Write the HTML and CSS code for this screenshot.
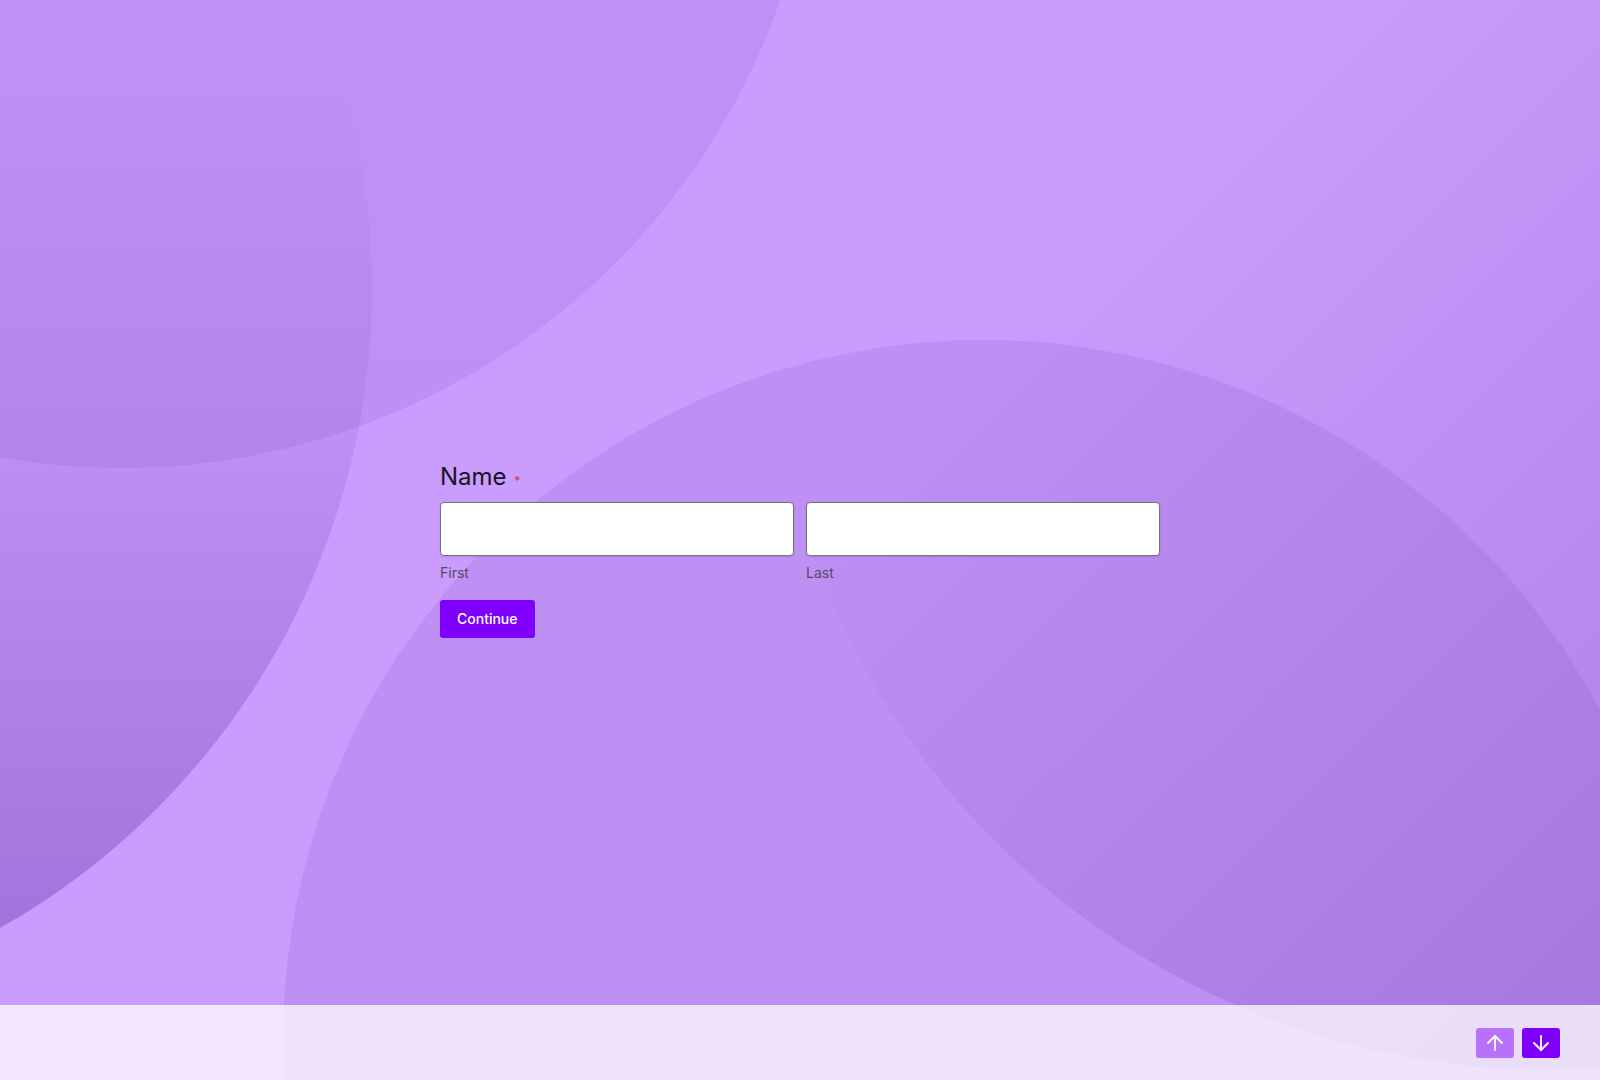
FILE: index.html
```html
<!DOCTYPE html>
<html lang="en">
<head>
<meta charset="utf-8">
<title>Name</title>
<link rel="stylesheet" href="styles.css">
</head>
<body>
  <div class="backdrop" aria-hidden="true">
    <div class="blob blob-1"></div>
    <div class="blob blob-2"></div>
    <div class="blob blob-3"></div>
    <div class="blob blob-4"></div>
  </div>

  <main class="stage">
    <form class="question">
      <h1 class="q-title">Name <span class="req">*</span></h1>
      <div class="name-grid">
        <label class="field">
          <input type="text" class="field-input">
          <span class="sub">First</span>
        </label>
        <label class="field">
          <input type="text" class="field-input">
          <span class="sub">Last</span>
        </label>
      </div>
      <button class="continue" type="button">Continue</button>
    </form>
  </main>

  <footer class="navbar">
    <button class="nav-btn is-disabled" type="button" aria-label="Previous">
      <svg width="24" height="24" viewBox="0 0 24 24" fill="none" stroke="currentColor" stroke-width="2" stroke-linecap="round" stroke-linejoin="round"><path d="M12 19V5"/><path d="M5 12l7-7 7 7"/></svg>
    </button>
    <button class="nav-btn" type="button" aria-label="Next">
      <svg width="24" height="24" viewBox="0 0 24 24" fill="none" stroke="currentColor" stroke-width="2" stroke-linecap="round" stroke-linejoin="round"><path d="M12 5v14"/><path d="M19 12l-7 7-7-7"/></svg>
    </button>
  </footer>
</body>
</html>
```

FILE: styles.css
```css
html, body {
  margin: 0;
  padding: 0;
}

body {
  height: 1080px;
  font-family: Inter, "Noto Sans", "Liberation Sans", sans-serif;
  background: #c99cfd;
  overflow: hidden;
  position: relative;
  display: flex;
  flex-direction: column;
}

/* decorative background circles */
.backdrop {
  position: absolute;
  inset: 0;
  overflow: hidden;
  z-index: 0;
}

.blob {
  position: absolute;
  border-radius: 50%;
}

.blob-1 {
  left: -575px;
  top: -926px;
  width: 1394px;
  height: 1394px;
  background: linear-gradient(180deg, rgba(78, 26, 143, 0.07), rgba(78, 26, 143, 0.09));
}

.blob-2 {
  left: -1098px;
  top: -446px;
  width: 1470px;
  height: 1470px;
  background: linear-gradient(180deg, rgba(78, 26, 143, 0) 36%, rgba(78, 26, 143, 0.09) 60%, rgba(78, 26, 143, 0.32) 95%);
}

.blob-3 {
  left: 283px;
  top: 340px;
  width: 1400px;
  height: 1400px;
  background: rgba(78, 26, 143, 0.085);
}

.blob-4 {
  left: 767px;
  top: -487px;
  width: 1556px;
  height: 1556px;
  background: linear-gradient(135deg, rgba(78, 26, 143, 0) 33%, rgba(78, 26, 143, 0.25) 85%);
}

/* content */
.stage {
  position: relative;
  z-index: 1;
  flex: 1;
  display: flex;
  justify-content: center;
  align-items: flex-start;
  padding-top: 461px;
}

.question {
  width: 720px;
  margin: 0;
}

.q-title {
  margin: 0 0 9px;
  font-size: 24px;
  line-height: 32px;
  font-weight: 400;
  color: #1b1324;
}

.req {
  color: #d9363e;
  font-size: 12px;
  line-height: 1;
  margin-left: 1px;
}

.name-grid {
  display: grid;
  grid-template-columns: 1fr 1fr;
  gap: 12px;
}

.field {
  display: flex;
  flex-direction: column;
}

.field-input {
  height: 54px;
  box-sizing: border-box;
  border: 1px solid #74747f;
  border-radius: 4px;
  background: #fff;
  box-shadow: 0 1px 2px rgba(0, 0, 0, 0.12);
  padding: 0 12px;
  font: inherit;
  font-size: 16px;
  outline: none;
}

.sub {
  margin-top: 7px;
  font-size: 14px;
  line-height: 20px;
  color: #574869;
}

.continue {
  margin-top: 17px;
  height: 38px;
  padding: 0 17px;
  background: #7f00ff;
  color: #fff;
  border: 0;
  border-radius: 3px;
  font-family: Inter, "Noto Sans", sans-serif;
  font-size: 14px;
  font-weight: 500;
  line-height: 38px;
  cursor: pointer;
}

/* bottom navigation bar */
.navbar {
  position: relative;
  z-index: 1;
  height: 75px;
  flex: none;
  background: rgba(255, 255, 255, 0.75);
  display: flex;
  justify-content: flex-end;
  align-items: center;
  gap: 8px;
  padding-right: 40px;
}

.nav-btn {
  width: 38px;
  height: 30px;
  border: 0;
  border-radius: 3px;
  background: #7f00ff;
  color: #fff;
  display: flex;
  align-items: center;
  justify-content: center;
  padding: 0;
  cursor: pointer;
}

.nav-btn.is-disabled {
  background: #b771fb;
  color: #fdf6ff;
}
```
